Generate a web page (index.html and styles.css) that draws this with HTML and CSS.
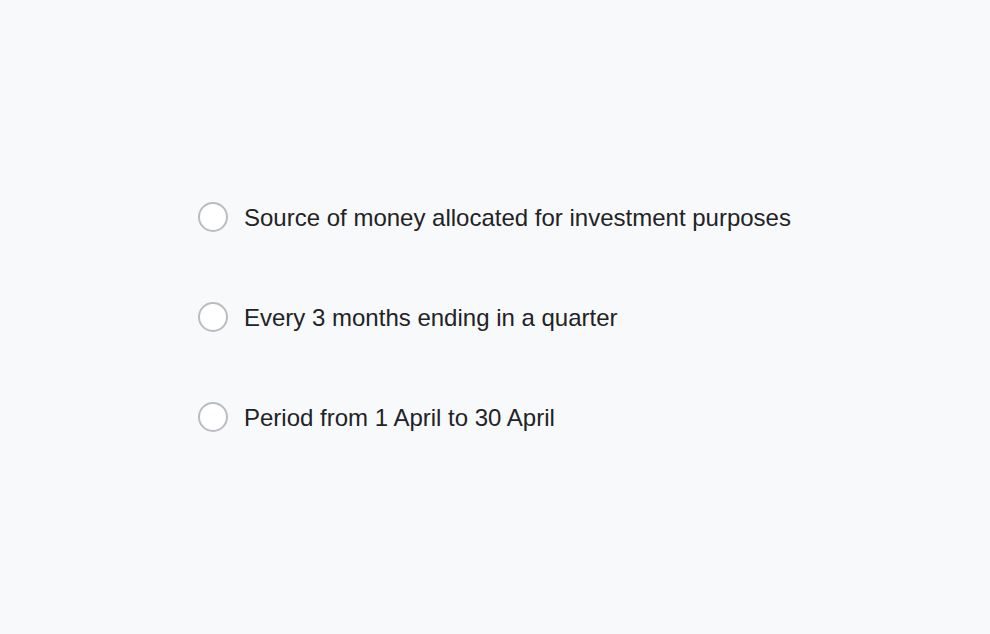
FILE: index.html
```html
<!DOCTYPE html>
<html>
<head>
<meta charset="utf-8">
<link rel="stylesheet" href="styles.css">
</head>
<body>
<div class="options">
  <label class="option"><span class="radio"></span><span class="text">Source of money allocated for investment purposes</span></label>
  <label class="option"><span class="radio"></span><span class="text">Every 3 months ending in a quarter</span></label>
  <label class="option"><span class="radio"></span><span class="text">Period from 1 April to 30 April</span></label>
</div>
</body>
</html>
```
FILE: styles.css
```css
html, body {
  margin: 0;
  padding: 0;
  background: #f8f9fb;
  width: 990px;
  height: 634px;
  overflow: hidden;
}
.options {
  display: flex;
  flex-direction: column;
  gap: 70px;
  padding: 202px 0 0 198px;
}
.option {
  display: flex;
  align-items: center;
  gap: 16px;
  height: 30px;
  font-family: "Liberation Sans", Arial, sans-serif;
  font-size: 24px;
  color: #222326;
}
.text {
  padding-top: 2px;
}
.radio {
  box-sizing: border-box;
  width: 30px;
  height: 30px;
  border: 2px solid #b9bdc3;
  border-radius: 50%;
  background: #ffffff;
  flex: none;
}
```
